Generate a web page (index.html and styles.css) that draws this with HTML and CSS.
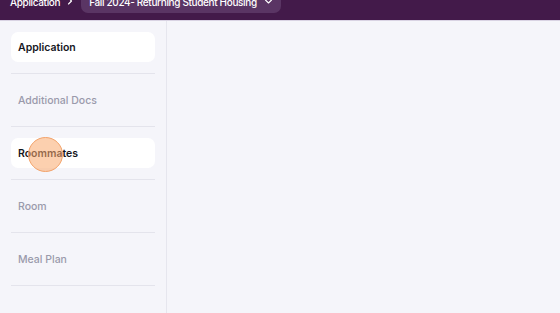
FILE: index.html
```html
<!DOCTYPE html>
<html>
<head>
    <title>Housing Application</title>
    <link rel="stylesheet" href="styles.css">
</head>
<body>
    <div class="topbar">
        <div class="crumbs">
            <span class="crumb-text">Application</span>
            <svg class="sep" width="8" height="8" viewBox="0 0 8 8"><path d="M2.5 1 L5.5 4 L2.5 7" fill="none" stroke="#fff" stroke-width="1.1" stroke-linecap="round" stroke-linejoin="round"/></svg>
            <div class="pill">
                <span class="crumb-text">Fall 2024- Returning Student Housing</span>
                <svg width="9" height="9" viewBox="0 0 9 9"><path d="M1.5 3 L4.5 6 L7.5 3" fill="none" stroke="#fff" stroke-width="1.1" stroke-linecap="round" stroke-linejoin="round"/></svg>
            </div>
        </div>
    </div>

    <div class="layout">
        <div class="sidebar">
            <div class="step"><div class="step-card active">Application</div></div>
            <div class="step"><div class="step-card">Additional Docs</div></div>
            <div class="step">
                <div class="step-card active">Roommates</div>
                <span class="click-dot"></span>
            </div>
            <div class="step"><div class="step-card">Room</div></div>
            <div class="step"><div class="step-card">Meal Plan</div></div>
        </div>
        <div class="main"></div>
    </div>
</body>
</html>
```

FILE: styles.css
```css
* {
    box-sizing: border-box;
}
body {
    margin: 0;
    font-family: Inter, "Noto Sans", sans-serif;
    background-color: #f5f5fa;
    height: 313px;
    overflow: hidden;
}
.topbar {
    height: 21px;
    background-color: #431a4a;
    border-bottom: 1px solid #d9d3e3;
    overflow: hidden;
}
.crumbs {
    display: flex;
    align-items: center;
    margin-top: -11px;
    padding-left: 10px;
    height: 24px;
    color: #ffffff;
    font-size: 10px;
    font-weight: 500;
    letter-spacing: -0.35px;
}
.crumb-text {
    margin-top: 2px;
}
.sep {
    margin: 0 7px 0 6px;
}
.pill {
    display: flex;
    align-items: center;
    gap: 7px;
    height: 24px;
    padding: 0 8px 0 8px;
    background-color: #5a3564;
    border-radius: 7px;
}
.layout {
    display: flex;
    height: 292px;
}
.sidebar {
    width: 167px;
    padding: 11px 11px 0 11px;
    border-right: 1px solid #e6e6ee;
}
.step {
    position: relative;
    padding-bottom: 11px;
    margin-bottom: 11px;
    border-bottom: 1px solid #e4e4ec;
}
.step-card {
    height: 30px;
    display: flex;
    align-items: center;
    padding-left: 7px;
    border-radius: 7px;
    font-size: 10.5px;
    font-weight: 500;
    color: #9a9aab;
}
.step-card.active {
    background-color: #ffffff;
    color: #16161d;
    font-weight: 600;
}
.click-dot {
    position: absolute;
    left: 17px;
    top: -1px;
    width: 35px;
    height: 35px;
    border-radius: 50%;
    background-color: rgba(249, 170, 110, 0.55);
    border: 1px solid #f3a36b;
}
.main {
    flex: 1;
}
```
